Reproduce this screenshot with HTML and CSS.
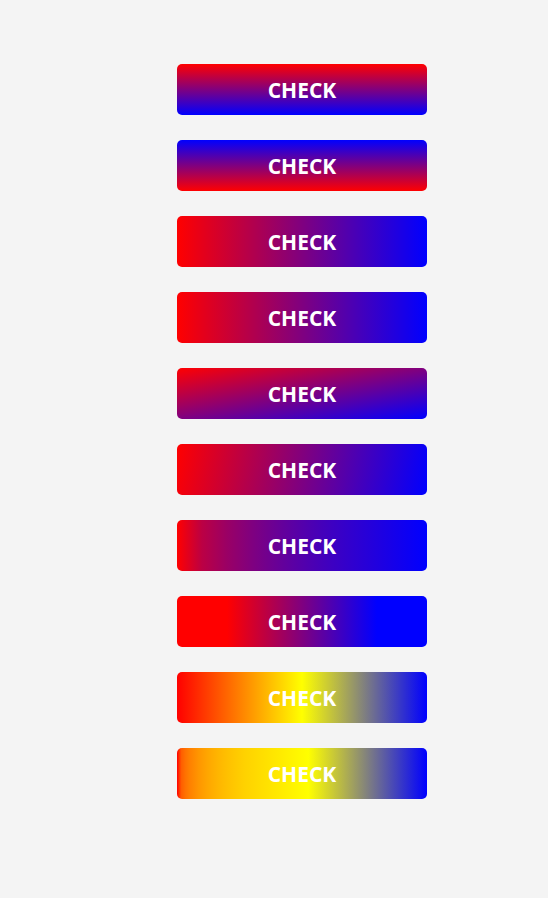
FILE: index.html
```html
<!DOCTYPE html>
<html>
<head>
<meta charset="utf-8">
<link rel="stylesheet" href="styles.css">
</head>
<body>
<div class="list">
  <button class="btn g1">CHECK</button>
  <button class="btn g2">CHECK</button>
  <button class="btn g3">CHECK</button>
  <button class="btn g4">CHECK</button>
  <button class="btn g5">CHECK</button>
  <button class="btn g6">CHECK</button>
  <button class="btn g7">CHECK</button>
  <button class="btn g8">CHECK</button>
  <button class="btn g9">CHECK</button>
  <button class="btn g10">CHECK</button>
</div>
</body>
</html>
```
FILE: styles.css
```css
html, body {
  margin: 0;
  background: #f4f4f4;
}
.list {
  display: flex;
  flex-direction: column;
  gap: 25px;
  padding: 64px 0 0 177px;
}
.btn {
  width: 250px;
  height: 51px;
  border: none;
  border-radius: 5px;
  padding: 1px 0 0;
  color: #fff;
  font-family: "Open Sans", "Noto Sans", sans-serif;
  font-weight: 700;
  font-size: 21px;
  line-height: 50px;
  text-align: center;
}
.g1 { background: linear-gradient(to bottom, red, blue); }
.g2 { background: linear-gradient(to top, red, blue); }
.g3 { background: linear-gradient(to right, red, blue); }
.g4 { background: linear-gradient(90deg, red, blue); }
.g5 { background: linear-gradient(to bottom right, red, blue); }
.g6 { background: linear-gradient(100deg, red, blue); }
.g7 { background: linear-gradient(to right, red, 30%, blue); }
.g8 { background: linear-gradient(to right, red 20%, blue 80%); }
.g9 { background: linear-gradient(to right, red, yellow, blue); }
.g10 { background: linear-gradient(to right, red, 5%, yellow, blue); }
```
